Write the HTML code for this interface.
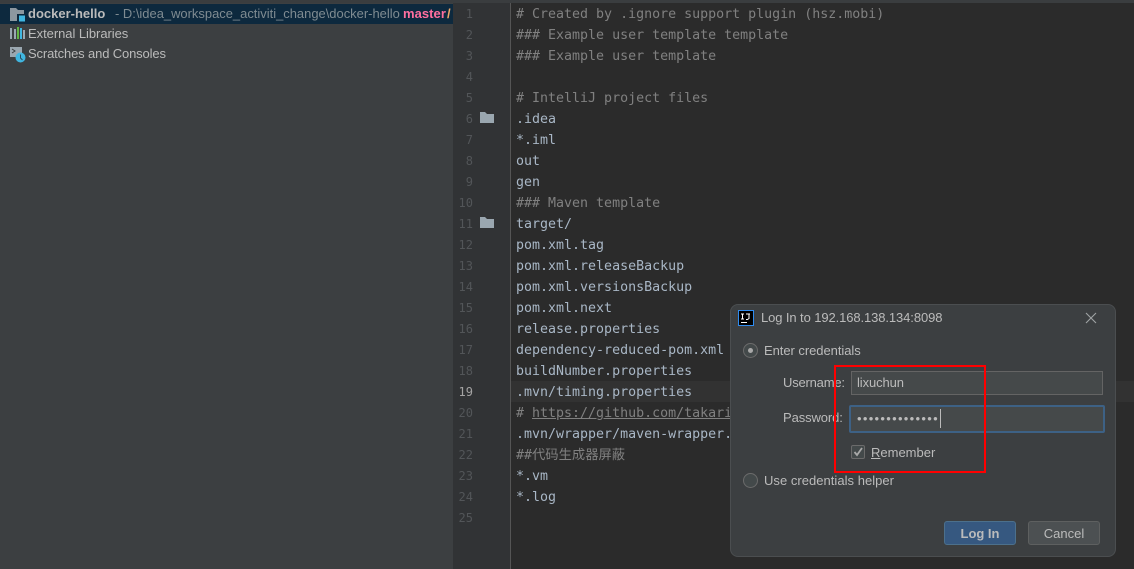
<!DOCTYPE html>
<html><head><meta charset="utf-8">
<style>
html,body{margin:0;padding:0;width:1134px;height:569px;overflow:hidden;background:#2b2b2b}
*{box-sizing:border-box}
.a{position:absolute;white-space:pre}
.s{font-family:"Liberation Sans","Noto Sans CJK SC",sans-serif;font-size:13px;line-height:16px;color:#bbbbbb}
.c{position:absolute;margin-top:1px;left:516px;font-family:"DejaVu Sans Mono","Noto Sans CJK SC",monospace;font-size:13.3px;line-height:21px;height:21px;color:#a9b7c6;white-space:pre}
.k{color:#808080}
.n{position:absolute;margin-top:1px;left:453px;width:20px;text-align:right;font-family:"DejaVu Sans Mono",monospace;font-size:12px;line-height:21px;height:21px;color:#525558}
</style></head><body>
<div class="a" style="left:0;top:0;width:453px;height:569px;background:#3c3f41"></div>
<div class="a" style="left:0;top:0;width:1134px;height:3px;background:#3a3d3f"></div>
<div class="a" style="left:0;top:4px;width:453px;height:20px;background:#0d293e"></div>
<div class="a" style="left:453px;top:3px;width:57px;height:566px;background:#313335"></div>
<div class="a" style="left:510px;top:3px;width:1px;height:566px;background:#555555"></div>
<div class="a" style="left:511px;top:381px;width:623px;height:21px;background:#323232"></div>

<svg class="a" style="left:10px;top:8px" width="16" height="14" viewBox="0 0 16 14"><path d="M0 0h6l2 2h6v4H7v7H0z" fill="#8c979f"/><rect x="9" y="7.500" width="6" height="6" fill="#40b6e0"/></svg>
<div class="a s" style="left:28px;top:6px;font-weight:bold;color:#bbbbbb">docker-hello</div>
<div class="a s" style="left:115px;top:6px;font-size:12.95px;color:#7f8b91">- D:\idea_workspace_activiti_change\docker-hello</div>
<div class="a s" style="left:403px;top:6px;font-weight:bold;letter-spacing:.05px;color:#ff6f9f">master</div>
<div class="a s" style="left:447px;top:6px;font-weight:bold;color:#f0a868">/</div>

<svg class="a" style="left:10px;top:27px" width="15" height="13" viewBox="0 0 15 13"><rect x="0" y="1" width="2" height="11" fill="#9aa7b0"/><rect x="4" y="2" width="2" height="10" fill="#9aa7b0"/><rect x="7" y="0" width="2" height="12" fill="#62b543"/><rect x="10" y="1" width="2" height="11" fill="#40b6e0"/><rect x="13" y="3" width="2" height="9" fill="#9aa7b0"/></svg>
<div class="a s" style="left:28px;top:26px;letter-spacing:-.05px">External Libraries</div>
<svg class="a" style="left:10px;top:47px" width="16" height="16" viewBox="0 0 16 16"><rect x="0" y="0" width="12" height="10" fill="#9aa7b0"/><path d="M2 2l3 2-3 2" fill="none" stroke="#3c3f41" stroke-width="1"/><circle cx="10.500" cy="10.500" r="5" fill="#40b6e0"/><path d="M10.500 7.500v3.500l2 2" fill="none" stroke="#2b4a5c" stroke-width="1"/></svg>
<div class="a s" style="left:28px;top:46px;letter-spacing:-.14px">Scratches and Consoles</div>

<div class="n" style="top:3px">1</div><div class="n" style="top:24px">2</div><div class="n" style="top:45px">3</div><div class="n" style="top:66px">4</div><div class="n" style="top:87px">5</div><div class="n" style="top:108px">6</div><div class="n" style="top:129px">7</div><div class="n" style="top:150px">8</div><div class="n" style="top:171px">9</div><div class="n" style="top:192px">10</div><div class="n" style="top:213px">11</div><div class="n" style="top:234px">12</div><div class="n" style="top:255px">13</div><div class="n" style="top:276px">14</div><div class="n" style="top:297px">15</div><div class="n" style="top:318px">16</div><div class="n" style="top:339px">17</div><div class="n" style="top:360px">18</div><div class="n" style="top:381px;color:#a4a3a3">19</div><div class="n" style="top:402px">20</div><div class="n" style="top:423px">21</div><div class="n" style="top:444px">22</div><div class="n" style="top:465px">23</div><div class="n" style="top:486px">24</div><div class="n" style="top:507px">25</div>

<svg class="a" style="left:480px;top:112px" width="14" height="11" viewBox="0 0 14 11"><path d="M0 0h5l2 2h7v9H0z" fill="#9aa7b0"/></svg>
<svg class="a" style="left:480px;top:217px" width="14" height="11" viewBox="0 0 14 11"><path d="M0 0h5l2 2h7v9H0z" fill="#9aa7b0"/></svg>

<div class="c k" style="top:3px"># Created by .ignore support plugin (hsz.mobi)</div>
<div class="c k" style="top:24px">### Example user template template</div>
<div class="c k" style="top:45px">### Example user template</div>
<div class="c k" style="top:87px"># IntelliJ project files</div>
<div class="c" style="top:108px">.idea</div>
<div class="c" style="top:129px">*.iml</div>
<div class="c" style="top:150px">out</div>
<div class="c" style="top:171px">gen</div>
<div class="c k" style="top:192px">### Maven template</div>
<div class="c" style="top:213px">target/</div>
<div class="c" style="top:234px">pom.xml.tag</div>
<div class="c" style="top:255px">pom.xml.releaseBackup</div>
<div class="c" style="top:276px">pom.xml.versionsBackup</div>
<div class="c" style="top:297px">pom.xml.next</div>
<div class="c" style="top:318px">release.properties</div>
<div class="c" style="top:339px">dependency-reduced-pom.xml</div>
<div class="c" style="top:360px">buildNumber.properties</div>
<div class="c" style="top:381px">.mvn/timing.properties</div>
<div class="c k" style="top:402px"># <span style="text-decoration:underline">https://github.com/takari</span></div>
<div class="c" style="top:423px">.mvn/wrapper/maven-wrapper.</div>
<div class="c k" style="top:444px">##代码生成器屏蔽</div>
<div class="c" style="top:465px">*.vm</div>
<div class="c" style="top:486px">*.log</div>

<div class="a" style="left:730px;top:304px;width:386px;height:253px;background:#3c3f41;border:1px solid #4b4e50;border-radius:8px"></div>
<svg class="a" style="left:738px;top:310px" width="16" height="16" viewBox="0 0 16 16"><rect x=".5" y=".5" width="15" height="15" fill="#000" stroke="#2f8cf0"/><path d="M3 4h3M4.500 4v5M3 9h3M8 4h4M11 4v4.500L9.500 9.500H8M3 12.500h6" fill="none" stroke="#fff" stroke-width="1"/></svg>
<div class="a s" style="left:761px;top:310px;letter-spacing:-.1px">Log In to 192.168.138.134:8098</div>
<svg class="a" style="left:1085px;top:312px" width="12" height="12" viewBox="0 0 12 12"><path d="M1 1l10 10M11 1L1 11" stroke="#a0a3a5" stroke-width="1.100"/></svg>

<div class="a" style="left:743px;top:343px;width:15px;height:15px;border-radius:50%;background:#43494a;border:1px solid #6b6b6b"></div>
<div class="a" style="left:748px;top:348px;width:5px;height:5px;border-radius:50%;background:#a9a9a9"></div>
<div class="a s" style="left:764px;top:343px;letter-spacing:-.05px">Enter credentials</div>

<div class="a s" style="left:783px;top:375px;letter-spacing:-.2px">Username:</div>
<div class="a" style="left:851px;top:371px;width:252px;height:24px;background:#45494a;border:1px solid #646464"></div>
<div class="a s" style="left:857px;top:375px;letter-spacing:-.1px">lixuchun</div>

<div class="a s" style="left:783px;top:410px;letter-spacing:-.1px">Password:</div>
<div class="a" style="left:849px;top:405px;width:256px;height:28px;background:#45494a;border:2px solid #3d6185;border-radius:2px"></div>
<div class="a s" style="left:857px;top:411px;letter-spacing:1.3px;font-size:13px">••••••••••••••</div>
<div class="a" style="left:940px;top:409px;width:1px;height:19px;background:#bbbbbb"></div>

<div class="a" style="left:851px;top:445px;width:14px;height:14px;background:#43494a;border:1px solid #6b6b6b;border-radius:2px"></div>
<svg class="a" style="left:851px;top:445px" width="14" height="14" viewBox="0 0 14 14"><path d="M3.500 7l2.500 3 5-7" fill="none" stroke="#a9a9a9" stroke-width="1.800"/></svg>
<div class="a s" style="left:871px;top:445px"><span style="text-decoration:underline">R</span>emember</div>

<div class="a" style="left:743px;top:473px;width:15px;height:15px;border-radius:50%;background:#43494a;border:1px solid #6b6b6b"></div>
<div class="a s" style="left:764px;top:473px;letter-spacing:.03px">Use credentials helper</div>

<div class="a" style="left:944px;top:521px;width:72px;height:24px;background:#365880;border:1px solid #4c708c;border-radius:3px"></div>
<div class="a s" style="left:944px;top:526px;width:72px;text-align:center;font-weight:bold">Log In</div>
<div class="a" style="left:1028px;top:521px;width:72px;height:24px;background:#4c5052;border:1px solid #5e6060;border-radius:3px"></div>
<div class="a s" style="left:1028px;top:526px;width:72px;text-align:center">Cancel</div>

<div class="a" style="left:834px;top:365px;width:152px;height:108px;border:2px solid #ff0000"></div>
</body></html>
